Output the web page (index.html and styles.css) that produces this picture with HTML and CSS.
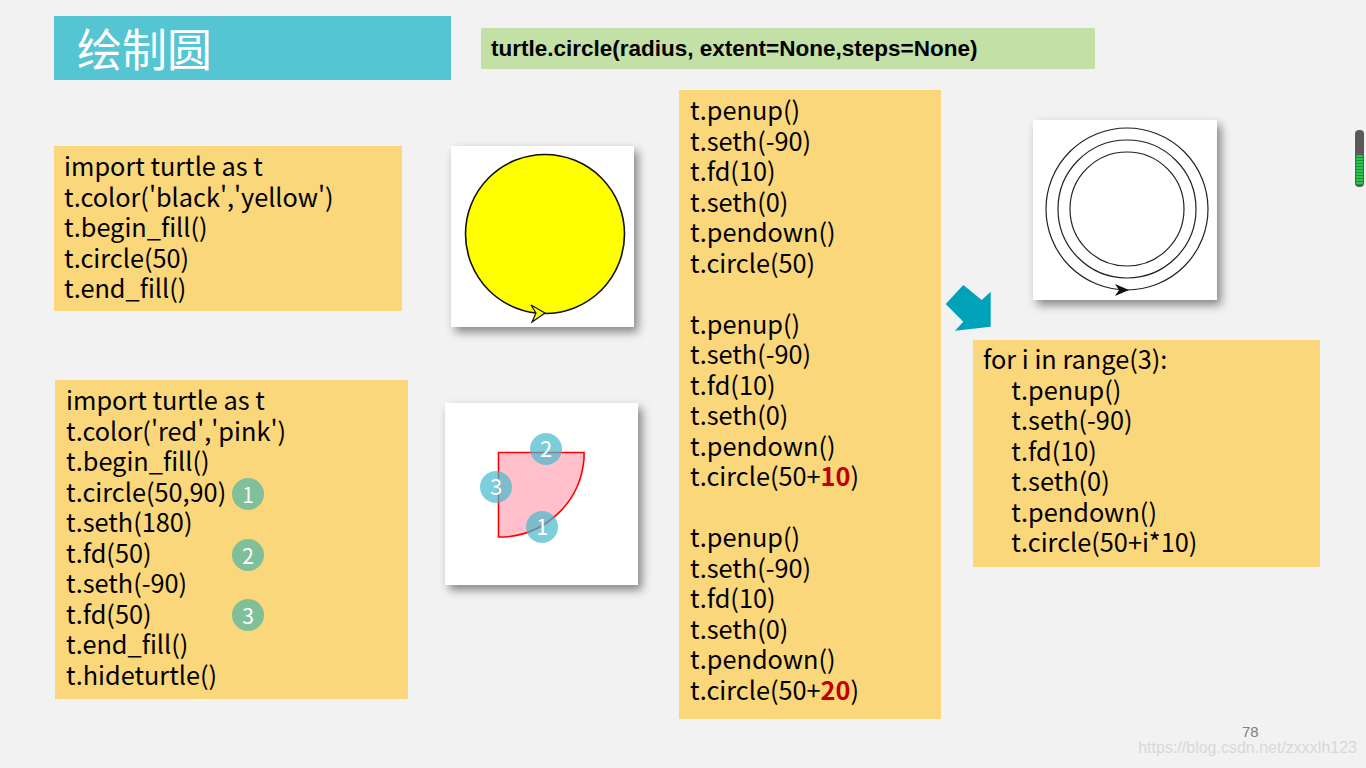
FILE: index.html
```html
<!DOCTYPE html>
<html lang="zh-CN">
<head>
    <meta charset="UTF-8">
    <title>绘制圆</title>
    <link rel="stylesheet" href="styles.css">
</head>
<body>
<div class="slide">
    <!-- 标题 -->
    <div class="title">绘制圆</div>
    <div class="signature">turtle.circle(radius, extent=None,steps=None)</div>

    <!-- 代码 1 -->
    <div class="code code-1">import turtle as t
t.color('black','yellow')
t.begin_fill()
t.circle(50)
t.end_fill()</div>

    <!-- 代码 2 -->
    <div class="code code-2">import turtle as t
t.color('red','pink')
t.begin_fill()
t.circle(50,90)
t.seth(180)
t.fd(50)
t.seth(-90)
t.fd(50)
t.end_fill()
t.hideturtle()</div>
    <span class="step s1">1</span>
    <span class="step s2">2</span>
    <span class="step s3">3</span>

    <!-- 代码 3 -->
    <div class="code code-3">t.penup()
t.seth(-90)
t.fd(10)
t.seth(0)
t.pendown()
t.circle(50)

t.penup()
t.seth(-90)
t.fd(10)
t.seth(0)
t.pendown()
t.circle(50+<b>10</b>)

t.penup()
t.seth(-90)
t.fd(10)
t.seth(0)
t.pendown()
t.circle(50+<b>20</b>)</div>

    <!-- 代码 4 -->
    <div class="code code-4">for i in range(3):
     t.penup()
     t.seth(-90)
     t.fd(10)
     t.seth(0)
     t.pendown()
     t.circle(50+i*10)</div>

    <!-- 截图 1: 黄色圆 -->
    <div class="shot shot-1">
        <svg width="183" height="181" viewBox="0 0 183 181">
            <circle cx="94" cy="88" r="79.5" fill="#ffff00" stroke="#111" stroke-width="1.6"/>
            <path d="M80 159 L94 167 L81 176 L85 167 Z" fill="#ffff00" stroke="#111" stroke-width="1.2"/>
        </svg>
    </div>

    <!-- 截图 2: 扇形 -->
    <div class="shot shot-2">
        <svg width="193" height="182" viewBox="0 0 193 182">
            <path d="M53.5 49.5 L139 49.5 L139 56 A85 85 0 0 1 60 134 L53.5 134 Z" fill="#ffc0cb" stroke="#ff0000" stroke-width="1.6"/>
            <circle cx="101" cy="46" r="16" fill="rgba(70,185,205,0.7)"/>
            <circle cx="51" cy="84" r="16" fill="rgba(70,185,205,0.7)"/>
            <circle cx="97" cy="124" r="16" fill="rgba(70,185,205,0.7)"/>
            <text x="101" y="54" class="num">2</text>
            <text x="51" y="92" class="num">3</text>
            <text x="97" y="132" class="num">1</text>
        </svg>
    </div>

    <!-- 截图 3: 同心圆 -->
    <div class="shot shot-3">
        <svg width="184" height="180" viewBox="0 0 184 180">
            <circle cx="94" cy="89" r="81" fill="none" stroke="#222" stroke-width="1.2"/>
            <circle cx="94" cy="89" r="69" fill="none" stroke="#222" stroke-width="1.2"/>
            <circle cx="94" cy="89" r="57" fill="none" stroke="#222" stroke-width="1.2"/>
            <path d="M82 164 L96 170 L82 176 L86 170 Z" fill="#111"/>
        </svg>
    </div>

    <!-- 箭头 -->
    <svg class="arrow" width="60" height="60" viewBox="0 0 60 60">
        <polygon points="23.3,5 41.7,20 50.7,11.7 50.7,46.7 15,50.7 23.3,41.7 5.7,24" fill="#00a2b9"/>
    </svg>

    <div class="page-no">78</div>
    <div class="watermark">https://blog.csdn.net/zxxxlh123</div>
    <div class="scroll"><div class="scroll-fill"></div></div>
</div>
</body>
</html>
```

FILE: styles.css
```css
body {
    margin: 0;
    background-color: #f2f2f2;
    font-family: "Noto Sans CJK SC", "Noto Sans", sans-serif;
}
.slide {
    position: relative;
    width: 1366px;
    height: 768px;
    overflow: hidden;
}
.title {
    position: absolute;
    left: 54px;
    top: 16px;
    width: 397px;
    height: 64px;
    background-color: #55c4d3;
    color: #fff;
    font-size: 45px;
    line-height: 64px;
    padding-left: 23px;
    box-sizing: border-box;
}
.signature {
    position: absolute;
    left: 481px;
    top: 28px;
    width: 614px;
    height: 41px;
    background-color: #c3e0a6;
    color: #000;
    font-family: "Liberation Sans", Arial, sans-serif;
    font-weight: bold;
    font-size: 22.5px;
    line-height: 41px;
    padding-left: 10px;
    box-sizing: border-box;
}
/* 代码块 */
.code {
    position: absolute;
    background-color: #fad77b;
    color: #000;
    font-size: 25.3px;
    line-height: 30.5px;
    white-space: pre;
    box-sizing: border-box;
    padding: 4px 10px;
}
.code b {
    color: #c00000;
}
.code-1 {
    left: 54px;
    top: 146px;
    width: 348px;
    height: 165px;
}
.code-2 {
    left: 55px;
    top: 380px;
    width: 353px;
    height: 319px;
    padding-left: 11px;
}
.code-3 {
    left: 679px;
    top: 90px;
    width: 262px;
    height: 629px;
    padding-left: 11px;
}
.code-4 {
    left: 973px;
    top: 340px;
    width: 347px;
    height: 227px;
    padding-top: 3px;
}
.step {
    position: absolute;
    left: 232px;
    width: 32px;
    height: 32px;
    border-radius: 50%;
    background-color: #7fbf99;
    color: #fff;
    font-size: 21px;
    line-height: 32px;
    text-align: center;
}
.s1 { top: 478px; }
.s2 { top: 539px; }
.s3 { top: 599px; }
/* 截图 */
.shot {
    position: absolute;
    background-color: #fff;
    box-shadow: 4px 5px 9px rgba(0, 0, 0, 0.45);
}
.shot svg {
    display: block;
}
.shot-1 {
    left: 451px;
    top: 146px;
    width: 183px;
    height: 181px;
}
.shot-2 {
    left: 445px;
    top: 403px;
    width: 193px;
    height: 182px;
}
.shot-3 {
    left: 1033px;
    top: 120px;
    width: 184px;
    height: 180px;
}
.num {
    fill: #fff;
    font-size: 22px;
    text-anchor: middle;
    font-family: "Noto Sans CJK SC", sans-serif;
}
.arrow {
    position: absolute;
    left: 940px;
    top: 280px;
}
.page-no {
    position: absolute;
    left: 1242px;
    top: 723px;
    font-size: 15px;
    color: #7f7f7f;
    font-family: "Liberation Sans", Arial, sans-serif;
}
.watermark {
    position: absolute;
    right: 9px;
    top: 739px;
    font-size: 16px;
    color: #d8d8d8;
    font-family: "Liberation Sans", Arial, sans-serif;
}
.scroll {
    position: absolute;
    left: 1355px;
    top: 130px;
    width: 9px;
    height: 57px;
    border-radius: 4px;
    background-color: #5a5a5a;
    display: flex;
    flex-direction: column;
    justify-content: flex-end;
    padding: 2px 1px;
    box-sizing: border-box;
}
.scroll-fill {
    height: 30px;
    border-radius: 2px;
    background: repeating-linear-gradient(#2ec24f 0 2px, #1a8f36 2px 3px);
}
```
